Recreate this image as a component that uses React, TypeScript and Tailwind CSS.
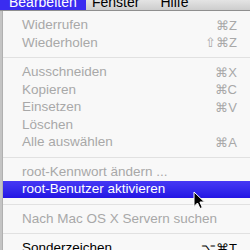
const items: (null | { label: string; shortcut?: string; state?: "disabled" | "active" | "normal" })[] = [
  { label: "Widerrufen", shortcut: "⌘Z", state: "disabled" },
  { label: "Wiederholen", shortcut: "⇧⌘Z", state: "disabled" },
  null,
  { label: "Ausschneiden", shortcut: "⌘X", state: "disabled" },
  { label: "Kopieren", shortcut: "⌘C", state: "disabled" },
  { label: "Einsetzen", shortcut: "⌘V", state: "disabled" },
  { label: "Löschen", state: "disabled" },
  { label: "Alle auswählen", shortcut: "⌘A", state: "disabled" },
  null,
  { label: "root-Kennwort ändern ...", state: "disabled" },
  { label: "root-Benutzer aktivieren", state: "active" },
  null,
  { label: "Nach Mac OS X Servern suchen", state: "disabled" },
  null,
  { label: "Sonderzeichen", shortcut: "⌥⌘T", state: "normal" },
];

function Cursor() {
  return (
    <svg width="14" height="19" viewBox="0 0 14 19" className="absolute left-[193px] top-[191px]">
      <path d="M1 1 L1 15.5 L4.5 12 L7 17.5 L9.3 16.5 L6.9 11 L11.5 11 Z" fill="#000" stroke="#fff" strokeWidth="1" />
    </svg>
  );
}

export default function App() {
  return (
    <div className="w-[250px] h-[250px] overflow-hidden relative bg-[#d2d2d2] font-['Liberation_Sans',Arial,sans-serif]">
      <div className="h-[11px] flex items-start bg-gradient-to-b from-[#e4e4e4] to-[#cdcdcd] border-b border-[#8f8f8f] text-[14px] leading-none text-black overflow-hidden">
        <div className="w-[86px] h-full bg-[#3a2cf0] text-white pl-[9px]">
          <div className="-mt-[5px] whitespace-nowrap">Bearbeiten</div>
        </div>
        <div className="ml-[6px] -mt-[5px]">Fenster</div>
        <div className="ml-[21px] -mt-[5px]">Hilfe</div>
      </div>
      <div className="flex h-full">
        <div className="w-[3px] bg-[#c4c4c4] border-r border-[#b0b0b0]"></div>
        <div className="flex-1 bg-[#f8f8f8] pt-[5.5px] text-[13.5px]">
          {items.map((it, i) =>
            it === null ? (
              <div key={i} className="h-[12px] flex items-center">
                <div className="h-px w-full bg-[#e1e1e1]"></div>
              </div>
            ) : (
              <div
                key={i}
                className={
                  "h-[17.5px] flex items-center pl-[19px] pr-[13px] " +
                  (it.state === "active"
                    ? "bg-gradient-to-b from-[#4638f4] to-[#2414e4] text-white"
                    : it.state === "normal"
                    ? "text-black"
                    : "text-[#a8a8a8]")
                }
              >
                <span className="flex-1 whitespace-nowrap">{it.label}</span>
                {it.shortcut && <span className="whitespace-nowrap text-[13px]">{it.shortcut}</span>}
              </div>
            )
          )}
        </div>
      </div>
      <Cursor />
    </div>
  );
}
